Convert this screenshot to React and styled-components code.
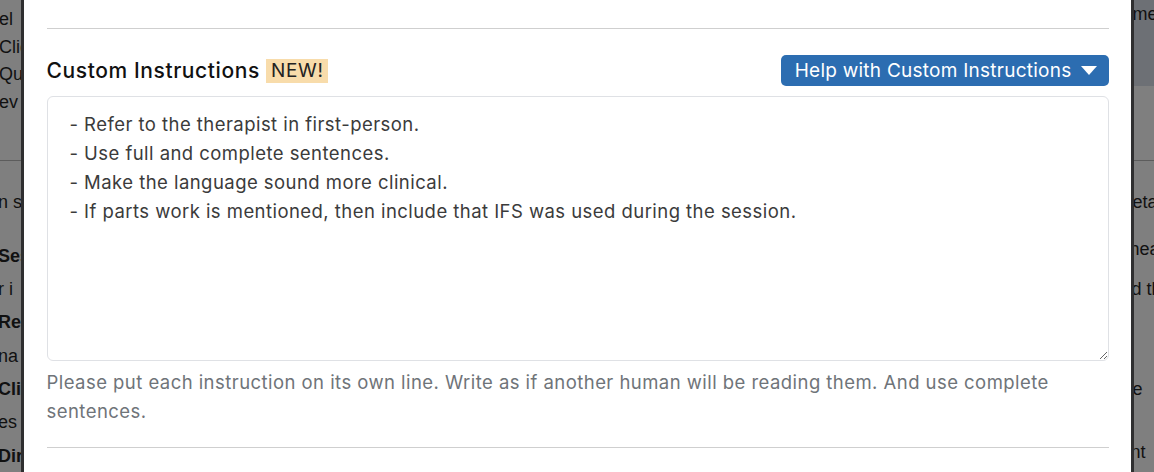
import React from "react";
import styled, { createGlobalStyle } from "styled-components";

const GlobalStyle = createGlobalStyle`
  html, body {
    margin: 0;
    padding: 0;
    height: 472px;
    overflow: hidden;
    background: #7f7f7f;
  }
  * {
    box-sizing: border-box;
  }
`;

const Backdrop = styled.div`
  display: flex;
  height: 472px;
  width: 1154px;
  background: #7f7f7f;
  font-family: Inter, "Noto Sans", sans-serif;
`;

const Side = styled.div`
  flex: 1;
  overflow: hidden;
  display: flex;
  flex-direction: column;
  color: #111;
  font-family: "Liberation Sans", Arial, sans-serif;
  font-size: 18px;
  white-space: nowrap;
`;

const SideTop = styled.div`
  height: 161px;
  flex: none;
  border-bottom: 1px solid #5c5c5c;
  padding-top: ${(p) => p.pad || 0}px;
`;

const SideHead = styled.div`
  height: 86px;
  background: #6d7075;
  padding-top: 1px;
`;

const SideBody = styled.div`
  padding-top: 28px;
`;

const SideLine = styled.div`
  height: 27.5px;
  line-height: 27.5px;
  font-weight: ${(p) => (p.bold ? 700 : 400)};
  margin-left: ${(p) => p.shift || 0}px;
  margin-bottom: ${(p) => p.gap || 0}px;
`;

const Modal = styled.div`
  width: 1113px;
  flex: none;
  background: #fff;
  border-left: 3px solid #2f2f30;
  border-right: 3px solid #2f2f30;
  padding: 0 22px 0 23px;
  font-family: Inter, "Noto Sans", sans-serif;
`;

const Divider = styled.hr`
  border: none;
  border-top: 1px solid #cfcfcf;
  margin: ${(p) => p.m};
`;

const Header = styled.div`
  display: flex;
  align-items: center;
  justify-content: space-between;
  height: 31px;
  margin-top: 26px;
`;

const Title = styled.h3`
  margin: 0;
  font-size: 21px;
  letter-spacing: 0.6px;
  font-weight: 500;
  color: #111;
  display: flex;
  align-items: center;
  gap: 6px;
`;

const Badge = styled.span`
  background: #f8dcab;
  color: #222;
  font-size: 19px;
  letter-spacing: 0.7px;
  font-weight: 400;
  padding: 2px 4px 2px 5px;
  line-height: 20px;
`;

const HelpButton = styled.button`
  display: flex;
  align-items: center;
  gap: 9px;
  height: 31px;
  padding: 0 12px 0 14px;
  border: none;
  border-radius: 5px;
  background: #2c6db1;
  color: #fff;
  font-family: inherit;
  font-size: 19px;
  letter-spacing: 0.25px;
  cursor: pointer;
`;

const Caret = styled.span`
  width: 0;
  height: 0;
  border-left: 8px solid transparent;
  border-right: 8px solid transparent;
  border-top: 9px solid #fff;
`;

const Field = styled.textarea`
  display: block;
  width: 100%;
  height: 265px;
  margin-top: 10px;
  padding: 13px 22px;
  border: 1px solid #dfe1e5;
  border-radius: 6px;
  font-family: Inter, "Noto Sans", sans-serif;
  font-size: 18.5px;
  letter-spacing: 0.45px;
  line-height: 29px;
  color: #3b3b3b;
  resize: vertical;
  outline: none;
`;

const Hint = styled.p`
  margin: 7px 0 0;
  font-size: 18.5px;
  letter-spacing: 0.45px;
  line-height: 29px;
  color: #6f7479;
`;

const leftTop = ["el", "Clic", "Qui", "ev"];
const leftBottom = [
  { t: "n s", gap: 26.5 },
  { t: "Ses", bold: true, gap: 5.5 },
  { t: "r i", gap: 5.5 },
  { t: "Rea", bold: true, gap: 6.5 },
  { t: "na", gap: 5.5 },
  { t: "Clie", bold: true, gap: 5.5 },
  { t: "es", gap: 6.5 },
  { t: "Dir", bold: true },
];
const rightBottom = [
  { t: "eta", gap: 19.5, shift: -1 },
  { t: "hea", gap: 12.5, shift: -4 },
  { t: "d th", gap: 72.5, shift: -2 },
  { t: "e", gap: 35.5, shift: -1 },
  { t: "nt", shift: -3 },
];

const instructions = [
  "- Refer to the therapist in first-person.",
  "- Use full and complete sentences.",
  "- Make the language sound more clinical.",
  "- If parts work is mentioned, then include that IFS was used during the session.",
].join("\n");

export default function App() {
  return (
    <>
      <GlobalStyle />
      <Backdrop>
        <Side>
          <SideTop pad={6}>
            {leftTop.map((t) => (
              <SideLine key={t} shift={-1}>
                {t}
              </SideLine>
            ))}
          </SideTop>
          <SideBody>
            {leftBottom.map((l) => (
              <SideLine key={l.t} bold={l.bold} gap={l.gap} shift={-2}>
                {l.t}
              </SideLine>
            ))}
          </SideBody>
        </Side>

        <Modal>
          <Divider m="28px 0 0" />
          <Header>
            <Title>
              Custom Instructions <Badge>NEW!</Badge>
            </Title>
            <HelpButton>
              Help with Custom Instructions <Caret />
            </HelpButton>
          </Header>
          <Field defaultValue={instructions} />
          <Hint>
            Please put each instruction on its own line. Write as if another
            human will be reading them. And use complete sentences.
          </Hint>
          <Divider m="21px 0 0" />
        </Modal>

        <Side>
          <SideTop>
            <SideHead>
              <SideLine shift={-1}>me</SideLine>
            </SideHead>
          </SideTop>
          <SideBody>
            {rightBottom.map((l) => (
              <SideLine key={l.t} gap={l.gap} shift={l.shift}>
                {l.t}
              </SideLine>
            ))}
          </SideBody>
        </Side>
      </Backdrop>
    </>
  );
}
